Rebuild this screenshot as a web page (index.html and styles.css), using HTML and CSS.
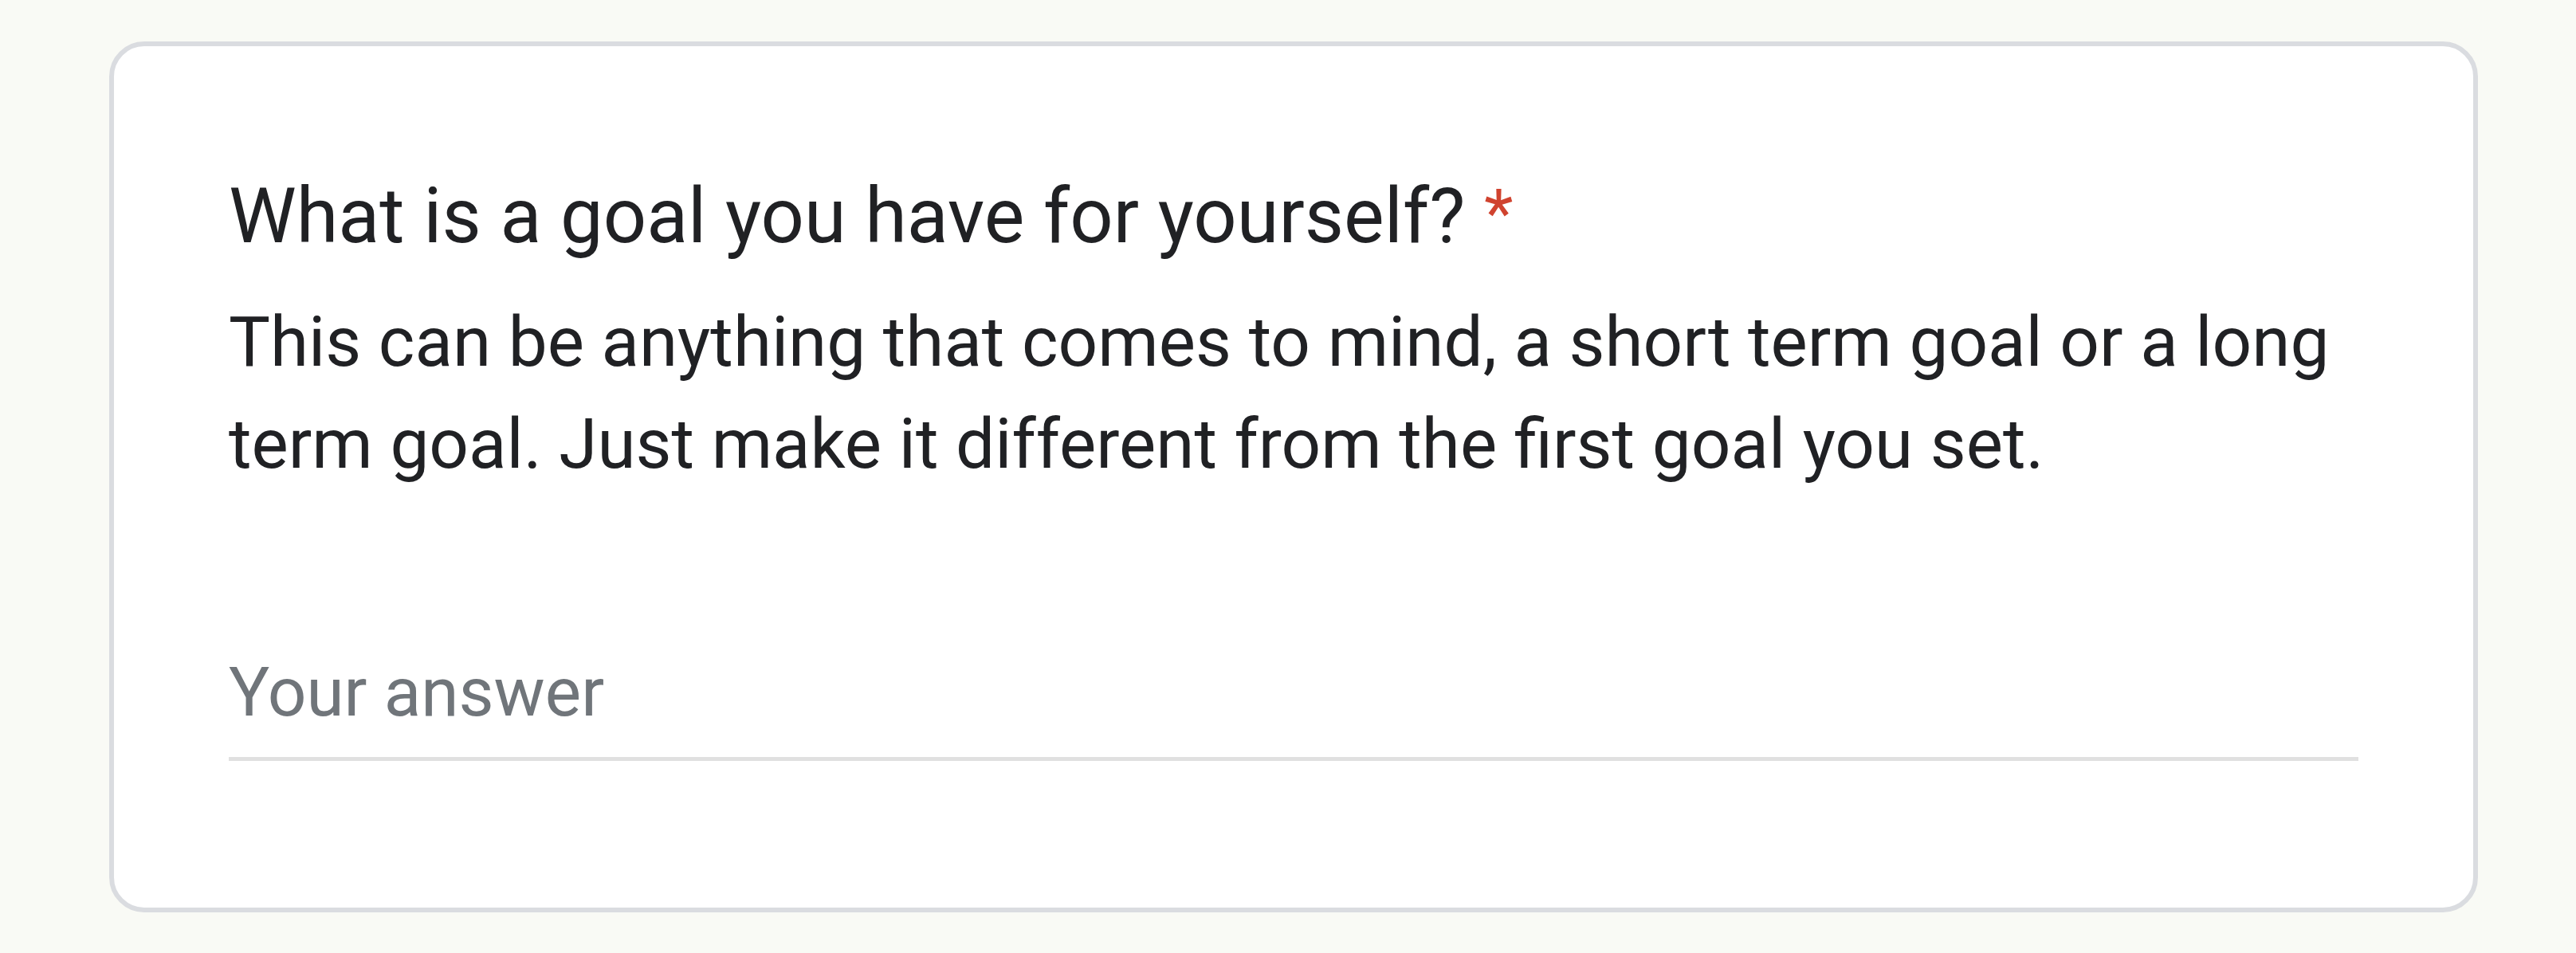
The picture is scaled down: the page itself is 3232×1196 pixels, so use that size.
FILE: index.html
```html
<!DOCTYPE html>
<html lang="en">
<head>
<meta charset="utf-8">
<title>Question</title>
<link rel="stylesheet" href="styles.css">
</head>
<body>
  <div class="card">
    <div class="title">What is a goal you have for yourself?<span class="required">*</span></div>
    <div class="desc">This can be anything that comes to mind, a short term goal or a long term goal. Just make it different from the first goal you set.</div>
    <div class="answer">Your answer</div>
  </div>
</body>
</html>
```
FILE: styles.css
```css
html, body {
  margin: 0;
  padding: 0;
}
body {
  background: #f9faf5;
  font-family: Roboto, "Noto Sans", Arial, sans-serif;
  width: 3232px;
  height: 1196px;
  overflow: hidden;
}
.card {
  box-sizing: border-box;
  margin: 52px 0 0 137px;
  width: 2972px;
  height: 1093px;
  background: #ffffff;
  border: 6px solid #dadce0;
  border-radius: 44px;
  padding: 143px 144px 0 144px;
}
.title {
  font-size: 95.5px;
  line-height: 140px;
  color: #202124;
}
.required {
  color: #d0432f;
  font-size: 84px;
  line-height: 1;
  vertical-align: 8px;
  padding-left: 24px;
}
.desc {
  margin-top: 24px;
  font-size: 87.2px;
  line-height: 128px;
  color: #202124;
}
.answer {
  margin-top: 198px;
  font-size: 85.5px;
  line-height: 100px;
  color: #70757a;
  padding-bottom: 31px;
  border-bottom: 5px solid #e0e0e0;
}
```
